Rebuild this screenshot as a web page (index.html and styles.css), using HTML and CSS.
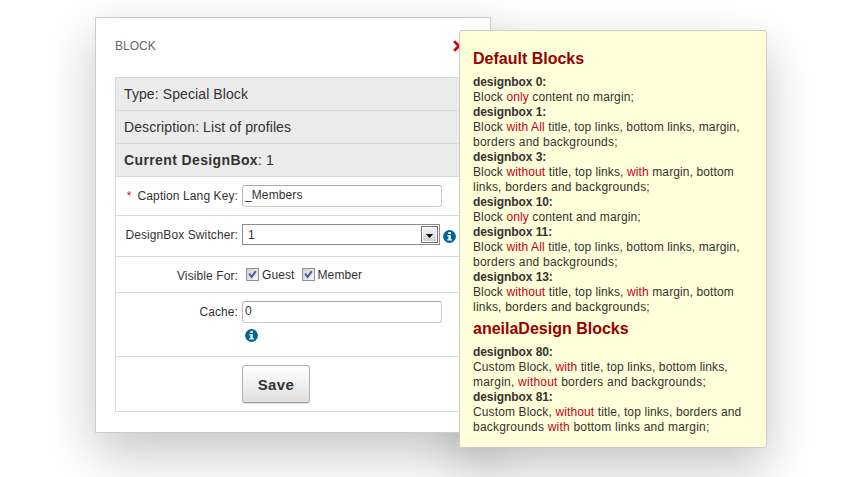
FILE: index.html
```html
<!DOCTYPE html>
<html lang="en">
<head>
<meta charset="utf-8">
<title>Block</title>
<link rel="stylesheet" href="styles.css">
</head>
<body>
<div class="popup">
  <div class="panel">
    <header class="panel-head">
      <span>BLOCK</span>
      <svg class="close" width="12" height="12" viewBox="0 0 12 12"><path d="M1.2 1.2 10.8 10.8M10.8 1.2 1.2 10.8"/></svg>
    </header>
    <form class="form">
      <div class="head-row">Type: Special Block</div>
      <div class="head-row">Description: List of profiles</div>
      <div class="head-row"><span><b>Current DesignBox</b>: 1</span></div>
      <div class="row row-caption">
        <label class="label"><i class="req">*</i>Caption Lang Key:</label>
        <div class="field input">_Members</div>
      </div>
      <div class="row row-switch">
        <label class="label">DesignBox Switcher:</label>
        <div class="select"><span>1</span><span class="arrow"><svg width="8" height="4" viewBox="0 0 8 4"><path d="M0 0h7L3.5 4z"/></svg></span></div>
        <svg class="info" width="13" height="13" viewBox="0 0 13 13"><circle cx="6.5" cy="6.5" r="6.4"/><path d="M5.4 2h2.4v2H5.4zM4.3 5h3.5v4.3h1.1v1.3H4.2V9.3h1.2v-3H4.3z"/></svg>
      </div>
      <div class="row row-visible">
        <label class="label">Visible For:</label>
        <div class="checks">
          <span class="box"><svg width="9" height="9" viewBox="0 0 9 9"><path d="M1.2 3.6 3.6 7 7.8 1.2"/></svg></span><span class="guest">Guest</span>
          <span class="box"><svg width="9" height="9" viewBox="0 0 9 9"><path d="M1.2 3.6 3.6 7 7.8 1.2"/></svg></span><span>Member</span>
        </div>
      </div>
      <div class="row row-cache">
        <label class="label">Cache:</label>
        <div class="stack">
          <div class="field input">0</div>
          <svg class="info" width="13" height="13" viewBox="0 0 13 13"><circle cx="6.5" cy="6.5" r="6.4"/><path d="M5.4 2h2.4v2H5.4zM4.3 5h3.5v4.3h1.1v1.3H4.2V9.3h1.2v-3H4.3z"/></svg>
        </div>
      </div>
      <div class="row row-save">
        <button type="button" class="save">Save</button>
      </div>
    </form>
  </div>
  <aside class="tip">
    <h2>Default Blocks</h2>
    <p><b>designbox 0:</b><br>Block <em>only</em> content no margin;</p>
    <p><b>designbox 1:</b><br>Block <em>with All</em> title, top links, bottom links, margin,<br><span class="wide">borders and backgrounds;</span></p>
    <p><b>designbox 3:</b><br>Block <em>without</em> title, top links, <em>with</em> margin, bottom<br><span class="wide">links, borders and backgrounds;</span></p>
    <p><b>designbox 10:</b><br>Block <em>only</em> content and margin;</p>
    <p><b>designbox 11:</b><br>Block <em>with All</em> title, top links, bottom links, margin,<br><span class="wide">borders and backgrounds;</span></p>
    <p><b>designbox 13:</b><br>Block <em>without</em> title, top links, <em>with</em> margin, bottom<br><span class="wide">links, borders and backgrounds;</span></p>
    <h2>aneilaDesign Blocks</h2>
    <p><b>designbox 80:</b><br>Custom Block, <em>with</em> title, top links, bottom links,<br><span class="wide">margin, <em>without</em> borders and backgrounds;</span></p>
    <p><b>designbox 81:</b><br>Custom Block, <em>without</em> title, top links, borders and<br><span class="wide">backgrounds <em>with</em> bottom links and margin;</span></p>
  </aside>
</div>
</body>
</html>
```

FILE: styles.css
```css
* { box-sizing: border-box; }
html { background: #fff; }
body {
  margin: 0;
  height: 477px;
  overflow: hidden;
  font: 12px/15px "Liberation Sans", Arial, sans-serif;
  color: #333;
}
.popup { position: relative; width: 852px; padding: 17px 0 0 95px; }
.panel {
  position: relative;
  width: 396px;
  height: 416px;
  padding: 0 19px;
  background: #fff;
  border: 1px solid #ccc;
  box-shadow: 0 20px 50px rgba(0, 0, 0, .23);
}
.panel-head {
  display: flex;
  justify-content: space-between;
  align-items: center;
  height: 59px;
  padding: 0 6px 3px 0;
  color: #666;
}
.close { fill: none; stroke: #d90000; stroke-width: 2.8; }
.form { margin: 0; border: 1px solid #d9d9d9; letter-spacing: .1px; }
.head-row {
  display: flex;
  align-items: center;
  height: 33px;
  padding-left: 8px;
  background: #ebebeb;
  border-bottom: 1px solid #d9d9d9;
  font-size: 14px;
}
.head-row b { letter-spacing: .38px; }
.row {
  display: flex;
  align-items: flex-start;
  border-bottom: 1px solid #d9d9d9;
}
.label { width: 122px; margin-right: 4px; text-align: right; white-space: nowrap; }
.req { margin-right: 6px; color: #f00; font-style: normal; }
.input {
  width: 200px;
  height: 22px;
  padding: 1px 2px;
  border: 1px solid #ccc;
  border-top-color: #aaa;
  border-left-color: #bbb;
  border-radius: 3px;
  line-height: 16px;
}
.row-caption { height: 39px; padding-top: 8px; }
.row-caption .label { padding-top: 4px; }
.row-switch { height: 41px; padding-top: 8px; }
.row-switch .label { padding-top: 4px; }
.select {
  display: flex;
  justify-content: space-between;
  width: 198px;
  height: 21px;
  padding: 1px 1px 1px 5px;
  border: 1px solid #8c8c8c;
  line-height: 19px;
}
.arrow {
  display: flex;
  align-items: center;
  justify-content: center;
  width: 17px;
  height: 17px;
  border: 1px solid #707070;
  background: linear-gradient(#f4f4f4, #cfcfcf);
  box-shadow: inset 0 0 0 1px #fff;
}
.arrow svg { margin-top: 3px; fill: #000; }
.info { display: block; fill: #fff; }
.info circle { fill: #069; }
.row-switch .info { margin: 6px 0 0 3px; }
.row-visible { height: 36px; padding-top: 11px; }
.row-visible .label { padding-top: 1px; }
.checks { display: flex; margin-left: 4px; line-height: 15px; }
.box {
  width: 13px;
  height: 13px;
  margin-right: 3px;
  padding: 1px;
  border: 1px solid #8e8f8f;
  background: linear-gradient(135deg, #cdd3da, #f6f6f6);
}
.box svg { display: block; fill: none; stroke: #4b5f97; stroke-width: 2; }
.guest { margin-right: 7px; }
.row-cache { height: 64px; padding-top: 8px; }
.row-cache .label { padding-top: 4px; }
.stack .info { margin: 6px 0 0 3px; }
.row-save { height: 54px; padding: 8px 0 0 126px; border-bottom: 0; }
.save {
  width: 68px;
  height: 38px;
  padding: 0;
  border: 1px solid #b4b4b4;
  border-bottom-color: #999;
  border-radius: 3px;
  background: linear-gradient(#fff, #e0e0e0);
  box-shadow: 0 1px 1px rgba(0, 0, 0, .12);
  font: bold 15px "Liberation Sans", Arial, sans-serif;
  letter-spacing: .4px;
  color: #333;
}
.tip {
  position: absolute;
  left: 459px;
  top: 30px;
  width: 308px;
  height: 418px;
  padding: 18px 0 0 13px;
  background: #ffffd9;
  border: 1px solid #ccc;
  border-radius: 3px;
  letter-spacing: .12px;
  white-space: nowrap;
}
.tip::before {
  content: "";
  position: absolute;
  inset: -1px;
  z-index: -1;
  border-radius: 3px;
  box-shadow: 0 20px 50px rgba(0, 0, 0, .23);
}
.tip h2 { margin: 0 0 7px; font-size: 16px; line-height: 19px; letter-spacing: 0; color: #900; }
.tip p { margin: 0; }
.tip b { letter-spacing: -.07px; }
.tip p + h2 { margin-top: 4px; }
.tip em { font-style: normal; color: #c8001e; }
.wide { letter-spacing: .22px; }
```
